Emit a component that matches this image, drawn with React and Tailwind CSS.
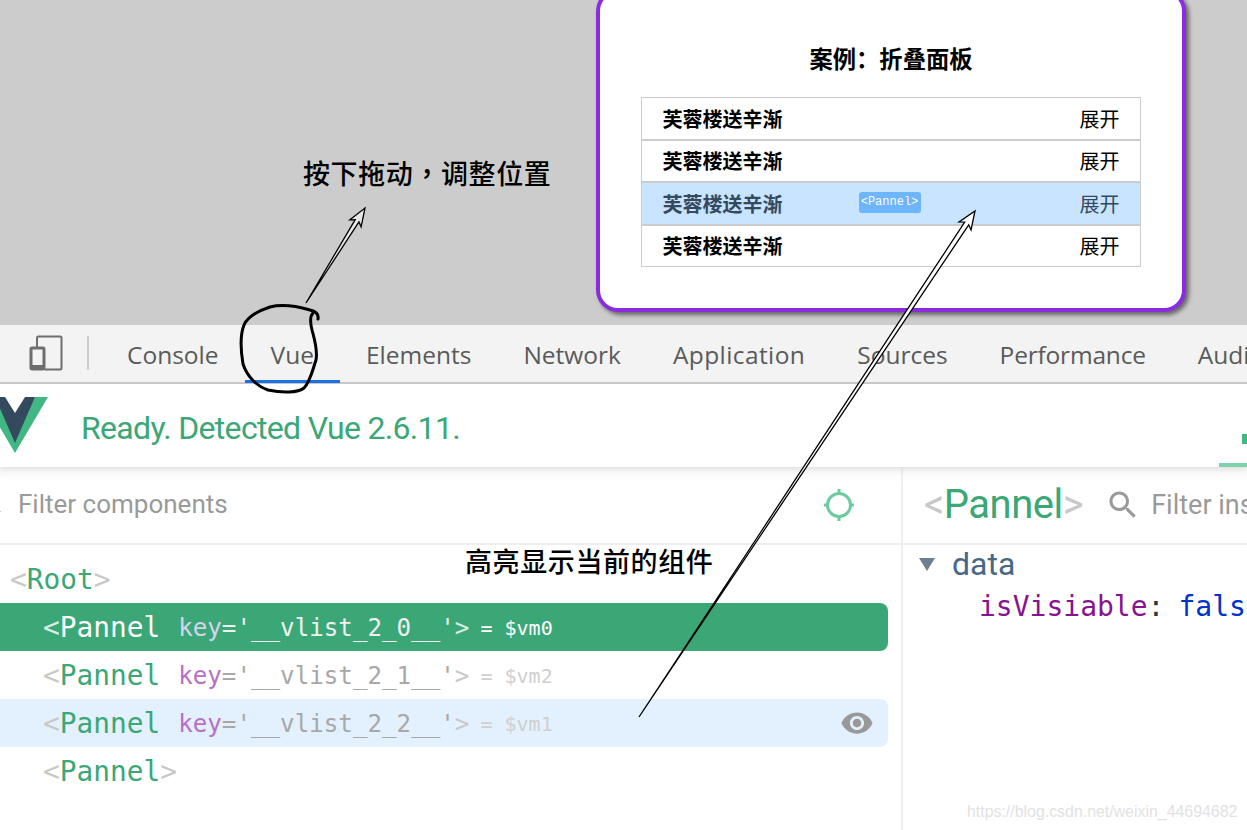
const mono = "font-['DejaVu_Sans_Mono',monospace]";
const cjk = "font-['Noto_Sans_CJK_SC',sans-serif]";

const tabs = ['Console', 'Vue', 'Elements', 'Network', 'Application', 'Sources', 'Performance', 'Audits'];

const panels = [false, false, true, false];

const rows = [
  { num: '0', vm: '$vm0', selected: true },
  { num: '1', vm: '$vm2' },
  { num: '2', vm: '$vm1', hovered: true },
];

// hollow drawn arrow, solid tail then opening up towards the head
const arrowPoints = (x1, y1, x2, y2, w, head) => {
  const len = Math.hypot(x2 - x1, y2 - y1);
  const ux = (x2 - x1) / len;
  const uy = (y2 - y1) / len;
  const nx = -uy;
  const ny = ux;
  const bx = x2 - ux * head;
  const by = y2 - uy * head;
  return [
    [x1, y1],
    [bx + nx * w, by + ny * w],
    [bx + nx * w * 3 - ux * 3, by + ny * w * 3 - uy * 3],
    [x2, y2],
    [bx - nx * w * 3 - ux * 3, by - ny * w * 3 - uy * 3],
    [bx - nx * w, by - ny * w],
  ]
    .map((p) => p.join(','))
    .join(' ');
};

const Annotations = () => (
  <svg className="absolute top-0 left-0 z-20 pointer-events-none" width="1247" height="830">
    <path
      d="M318 319 C319 313 315 311 310 310 C296 306 282 304 270 307 C258 311 248 316 244 325 C240 335 241 352 243 364 C247 376 256 386 268 390 C282 393 298 393 304 388 C310 382 312 372 316 360 C318 350 314 338 312 330 C310 322 310 316 313 313"
      fill="none"
      stroke="#000"
      strokeWidth="3"
      strokeLinecap="round"
    />
    <polygon points={arrowPoints(306, 303, 365, 208, 2.2, 15)} fill="#e8e8e8" stroke="#000" strokeWidth="1.3" />
    <polygon points={arrowPoints(639, 717, 975, 211, 2.4, 15)} fill="#fff" stroke="#000" strokeWidth="1.3" />
  </svg>
);

const DeviceIcon = () => (
  <svg width="34" height="36" viewBox="0 0 34 36" className="shrink-0">
    <path d="M8 12V3a1.5 1.5 0 0 1 1.500-1.500H31A1.500 1.500 0 0 1 32.500 3v30a1.500 1.500 0 0 1-1.500 1.500H16" fill="none" stroke="#6e6e6e" strokeWidth="2" />
    <rect x="2" y="13" width="13" height="21" rx="1" fill="#f3f3f3" stroke="#6e6e6e" strokeWidth="3" />
    <rect x="1" y="30" width="15" height="5" fill="#6e6e6e" />
  </svg>
);

const VueLogo = () => (
  <svg width="48" height="57" viewBox="0 0 48 57" className="shrink-0">
    <polygon points="-18,0 -5,0 15,34 35,0 48,0 15,56" fill="#41b883" />
    <polygon points="-5,0 5,0 15,16 25,0 35,0 15,46" fill="#35495e" />
  </svg>
);

const TargetIcon = () => (
  <svg width="32" height="34" viewBox="0 0 32 34" className="ml-auto">
    <circle cx="16" cy="17" r="11.500" fill="none" stroke="#6ccb9f" strokeWidth="3" />
    <path d="M16 1v5M16 28v5M1 17h5M26 17h5" stroke="#6ccb9f" strokeWidth="3" />
  </svg>
);

const SearchIcon = ({ className }) => (
  <svg width="36" height="36" viewBox="0 0 24 24" fill="#999" className={className}>
    <path d="M15.500 14h-.79l-.28-.27C15.410 12.590 16 11.110 16 9.500 16 5.910 13.090 3 9.500 3S3 5.910 3 9.500 5.910 16 9.500 16c1.610 0 3.090-.59 4.230-1.570l.27.28v.79l5 4.990L20.490 19l-4.990-5zm-6 0C7.010 14 5 11.990 5 9.500S7.010 5 9.500 5 14 7.010 14 9.500 11.990 14 9.500 14z" />
  </svg>
);

const EyeIcon = () => (
  <svg width="34" height="34" viewBox="0 0 24 24" fill="#999">
    <path d="M12 4.500C7 4.500 2.730 7.610 1 12c1.730 4.390 6 7.500 11 7.500s9.270-3.110 11-7.500c-1.730-4.390-6-7.500-11-7.500zM12 17c-2.760 0-5-2.240-5-5s2.240-5 5-5 5 2.240 5 5-2.240 5-5 5zm0-8c-1.660 0-3 1.340-3 3s1.340 3 3 3 3-1.340 3-3-1.340-3-3-3z" />
  </svg>
);

const Bracket = ({ children, selected }) => (
  <span className={selected ? 'text-[#d9efe4]' : 'text-[#c8c8c8]'}>{children}</span>
);

const TreeRow = ({ num, vm, selected, hovered }) => (
  <div
    className={`flex items-center h-12 w-[888px] rounded-r-lg pl-[43px] pr-[14px] whitespace-nowrap ${mono} ${
      selected ? 'bg-[#3ba776]' : hovered ? 'bg-[#e3f1fe]' : ''
    }`}
  >
    <span className={`pt-[2px] text-[27.800px] ${selected ? 'text-white' : 'text-[#3ba776]'}`}>
      <Bracket selected={selected}>&lt;</Bracket>Pannel
    </span>
    <span className={`ml-[18px] pt-[2px] text-[24.200px] ${selected ? 'text-[#f0f0f0]' : 'text-[#a8a8a8]'}`}>
      <span className={selected ? 'text-[#d5d3ee]' : 'text-[#b96fc6]'}>key</span>
      ='__vlist_2_{num}__'<Bracket selected={selected}>&gt;</Bracket>
    </span>
    <span className={`ml-[11px] pt-[2px] text-[20px] ${selected ? 'text-white' : 'text-[#cfcfcf]'}`}>= {vm}</span>
    {hovered && (
      <span className="ml-auto flex">
        <EyeIcon />
      </span>
    )}
  </div>
);

export default function App() {
  return (
    <div className="relative w-[1247px] h-[830px] overflow-hidden bg-white font-['Roboto',sans-serif]">
      <Annotations />

      {/* page being inspected */}
      <div className="relative h-[325px] bg-[#cccccc] flex justify-end pr-[61px]">
        <div className={`relative z-10 w-[590px] h-[323px] -mt-[11px] bg-white border-4 border-[#8a2be2] rounded-[22px] shadow-[3px_3px_4px_#666] flex flex-col items-center ${cjk}`}>
          <h1 className="mt-[48px] h-[34px] text-[23.300px] leading-[34px] font-bold text-black">案例：折叠面板</h1>
          <div className="mt-[22px] mr-[1px] w-[500px] flex flex-col">
            {panels.map((active, i) => (
              <div
                key={i}
                className={`relative h-[42.500px] flex items-center justify-between pl-[21px] pr-5 pt-[1px] border border-[#cccccc] text-[20px] ${
                  active ? 'bg-[#c8e4fe] text-[#35495e]' : 'bg-white text-black'
                }`}
              >
                <span className="font-bold">芙蓉楼送辛渐</span>
                {active && (
                  <span className="absolute left-[217px] top-[9px] h-[21px] w-[62px] rounded-[3px] bg-[#6db5fd] text-white text-[12px] leading-[21px] text-center font-['Liberation_Mono',monospace]">
                    &lt;Pannel&gt;
                  </span>
                )}
                <span>展开</span>
              </div>
            ))}
          </div>
        </div>
        <span className={`absolute left-[303px] top-[155px] text-[27px] tracking-[0.600px] leading-[36px] font-medium text-black ${cjk}`}>
          按下拖动<span className="font-['Noto_Sans_CJK_TC',sans-serif]">，</span>调整位置
        </span>
      </div>

      {/* devtools tab bar */}
      <div className="flex items-center h-[59px] bg-[#f3f3f3] border-b-2 border-[#cccccc] font-['Open_Sans',sans-serif] whitespace-nowrap">
        <div className="w-[101px] shrink-0 flex items-center h-full pl-[29px] pb-[2px]">
          <DeviceIcon />
          <span className="ml-[24px] w-[2px] h-[34px] bg-[#cccccc]" />
        </div>
        {tabs.map((tab) => (
          <div
            key={tab}
            className={`h-[59px] flex items-center px-[26px] text-[24.500px] text-[#5a5a5a] ${
              tab === 'Vue' ? 'border-b-[3px] border-[#1a73e8] pt-[7px]' : 'pt-[4px]'
            } ${tab === 'Application' ? 'tracking-[0.400px]' : ''} ${tab === 'Performance' ? 'tracking-[-0.200px]' : ''}`}
          >
            {tab}
          </div>
        ))}
      </div>

      {/* vue devtools header */}
      <div className="relative z-10 flex items-center h-[83px] bg-white shadow-[0_2px_6px_rgba(0,0,0,0.1)]">
        <VueLogo />
        <span className="ml-[33px] pt-[5px] text-[32px] text-[#3ba776] tracking-[-0.680px]">Ready. Detected Vue 2.6.11.</span>
        <div className="ml-auto w-[28px] h-full flex flex-col items-end justify-between pt-[50px]">
          <span className="w-[5px] h-[10px] bg-[#42b983]" />
          <span className="w-full h-[4px] bg-[#7dd3ab]" />
        </div>
      </div>

      {/* split panes */}
      <div className="flex h-[363px]">
        <div className="w-[901px] shrink-0">
          <div className="flex items-center h-[78px] pr-[46px] border-b-2 border-[#eeeeee] bg-gradient-to-b from-[#f7f7f7] to-white to-[20%]">
            <SearchIcon className="-ml-[30px] -mt-[8px] shrink-0" />
            <span className="ml-[12px] pb-[2px] text-[26px] text-[#9a9a9a]">Filter components</span>
            <TargetIcon />
          </div>
          <div className={`flex items-center h-[58px] pt-[12px] pl-[10px] text-[27.800px] text-[#3ba776] ${mono}`}>
            <Bracket>&lt;</Bracket>Root<Bracket>&gt;</Bracket>
          </div>
          {rows.map((row) => (
            <TreeRow key={row.num} {...row} />
          ))}
          <div className={`flex items-center h-12 pl-[43px] pt-[2px] text-[27.800px] text-[#3ba776] ${mono}`}>
            <Bracket>&lt;</Bracket>Pannel<Bracket>&gt;</Bracket>
          </div>
        </div>

        <div className="flex-1 min-w-0 border-l-2 border-[#eeeeee] whitespace-nowrap overflow-hidden">
          <div className="flex items-center h-[78px] pl-[21px] border-b-2 border-[#eeeeee] bg-gradient-to-b from-[#f7f7f7] to-white to-[20%]">
            <span className="text-[40px] text-[#3ba776] tracking-[-0.500px]">
              <Bracket>&lt;</Bracket>Pannel<Bracket>&gt;</Bracket>
            </span>
            <span className="ml-[22px] flex">
              <SearchIcon />
            </span>
            <span className="ml-[10px] text-[27px] text-[#9a9a9a]">Filter inspected data</span>
          </div>
          <div className="flex items-center h-[38px] pl-[16px]">
            <span className="w-0 h-0 border-x-[8px] border-x-transparent border-t-[13px] border-t-[#6f7f91]" />
            <span className="ml-[17px] text-[32px] text-[#486887]">data</span>
          </div>
          <div className={`h-[48px] flex items-center pl-[76px] text-[28px] ${mono}`}>
            <span className="text-[#881391]">isVisiable</span>
            <span className="text-[#333333]">:</span>
            <span className="ml-[14px] text-[#0033cc]">false</span>
          </div>
        </div>
      </div>

      <span className={`absolute left-[465px] top-[543px] z-10 text-[27px] tracking-[0.600px] leading-[36px] font-medium text-black ${cjk}`}>
        高亮显示当前的组件
      </span>
      <span className="absolute left-[967px] top-[800px] text-[15.900px] text-[#e2e2e2] font-['Liberation_Sans',sans-serif]">
        https://blog.csdn.net/weixin_44694682
      </span>
    </div>
  );
}
